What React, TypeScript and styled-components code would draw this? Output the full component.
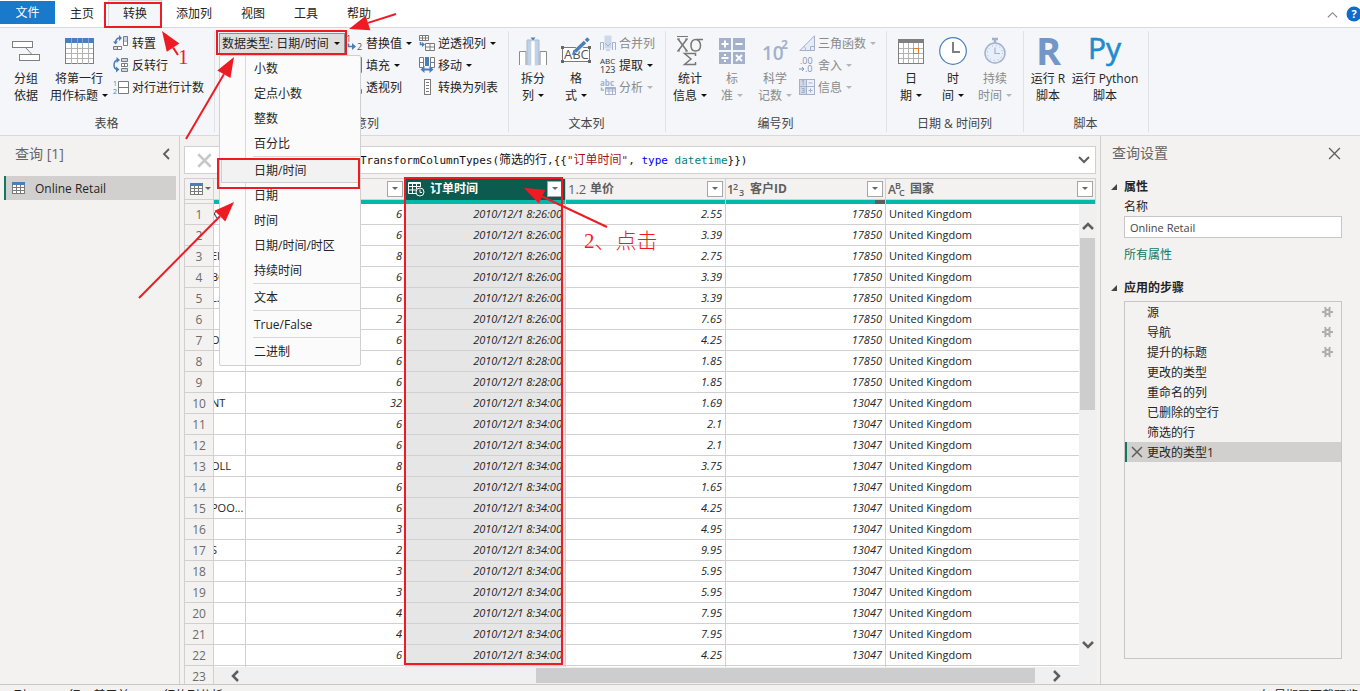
import React from 'react';
import styled, { createGlobalStyle, css } from 'styled-components';

const red = '#ed1c24';
const teal = '#01b8aa';
const line = '#d0d0d0';
const panel = '#f3f2f1';
const blue = '#4a7ebb';
const grey = '#7a7a7a';
const soft = '#a3b1cc';

const GlobalStyle = createGlobalStyle`
  *, *::before, *::after { box-sizing: border-box; }
  html, body { margin: 0; overflow: hidden; }
  body {
    font: 12px/17px "Open Sans", "Noto Sans CJK SC", sans-serif;
    color: #252423;
    background: ${panel};
  }
  button, input { font: inherit; color: inherit; }
  button { border: 0; padding: 0; background: none; cursor: pointer; }
  ul { list-style: none; margin: 0; padding: 0; }
  svg { display: block; flex: none; overflow: visible; }
`;

const App_ = styled.div`
  position: relative;
  display: flex;
  flex-direction: column;
  height: 100vh;
`;

/* ---------- tab strip ---------- */

const TabStrip = styled.nav`
  display: flex;
  gap: 1px;
  flex: none;
  height: 28px;
  padding-top: 1px;
  background: #fff;
  border-bottom: 1px solid #d6d9dd;
`;

const Tab = styled.button<{ $file?: boolean; $active?: boolean }>`
  height: ${p => (p.$file ? 23 : 26)}px;
  padding: 0 14px 1px;
  ${p => p.$file && css`
    width: 55px;
    padding: 0;
    color: #fff;
    background: #1979ca;
  `}
  ${p => p.$active && css`
    background: #f4f6f9;
    box-shadow: 0 0 0 1px #d6d9dd;
  `}
`;

const TabTools = styled.div`
  display: flex;
  align-items: center;
  gap: 8px;
  margin-left: auto;
  margin-right: -2px;
`;

/* ---------- ribbon ---------- */

const Ribbon = styled.section`
  display: flex;
  flex: none;
  height: 108px;
  background: #f4f6f9;
  border-bottom: 1px solid #d6d9dd;
`;

const Group = styled.div<{ $w: number }>`
  position: relative;
  display: flex;
  flex-direction: column;
  flex: none;
  width: ${p => p.$w}px;
  padding-top: 4px;
  &::after {
    content: '';
    position: absolute;
    right: 0;
    top: 3px;
    bottom: 3px;
    width: 1px;
    background: #dfe1e5;
  }
`;

const GroupBody = styled.div<{ $pad?: number }>`
  display: flex;
  height: 82px;
  padding-left: ${p => p.$pad ?? 3}px;
`;

const GroupLabel = styled.div`
  height: 20px;
  padding-right: 2px;
  line-height: 20px;
  text-align: center;
  color: #444;
`;

const BigButton = styled.button<{ $w: number; $off?: boolean }>`
  display: flex;
  flex-direction: column;
  align-items: center;
  flex: none;
  width: ${p => p.$w}px;
  height: 72px;
  white-space: nowrap;
  color: ${p => (p.$off ? '#8a8a8a' : 'inherit')};
`;

const BigIcon = styled.span`
  display: flex;
  align-items: center;
  justify-content: center;
  flex: none;
  height: 38px;
`;

const LabelLine = styled.span<{ $tight?: boolean }>`
  display: flex;
  align-items: center;
  gap: ${p => (p.$tight ? 2 : 4)}px;
`;

const SmallStack = styled.div<{ $w?: number }>`
  display: flex;
  flex-direction: column;
  flex: none;
  align-items: flex-start;
  width: ${p => (p.$w ? `${p.$w}px` : 'auto')};
  ${BigButton} + & { margin-left: 2px; }
`;

const SmallButton = styled.button<{ $off?: boolean }>`
  display: flex;
  align-items: center;
  gap: 3px;
  height: 22px;
  white-space: nowrap;
  color: ${p => (p.$off ? '#8a8a8a' : 'inherit')};
`;

const CaretShape = styled.span<{ $c: string }>`
  flex: none;
  border: 3px solid transparent;
  border-top-color: ${p => p.$c};
  border-bottom: 0;
`;

const TypePicker = styled.div`
  position: relative;
  flex: none;
  width: 126px;
  margin-right: 1px;
`;

const TypeButton = styled.button`
  display: flex;
  align-items: center;
  justify-content: space-between;
  width: 100%;
  height: 21px;
  margin-top: 1px;
  padding: 0 4px 0 2px;
  white-space: nowrap;
  background: #dedede;
  border: 1px solid #8f8f8f;
`;

const TypeMenu = styled.ul`
  position: absolute;
  z-index: 5;
  top: 23px;
  left: 0;
  width: 142px;
  padding-bottom: 1px;
  background: linear-gradient(to right, transparent 25px, #dadada 25px, #dadada 26px, transparent 26px) #fbfbfb;
  border: 1px solid #d0d0d0;
  border-radius: 2px;
`;

const MenuItem = styled.li<{ $hover?: boolean }>`
  height: 25px;
  padding: 0 1px;
  button {
    width: 100%;
    height: 25px;
    padding: 0 0 1px 32px;
    text-align: left;
    border: 1px solid transparent;
    ${p => p.$hover && css`
      background: #f2f2f2;
      border-color: #cfcfcf;
    `}
  }
`;

const MenuRule = styled.li`
  height: 2px;
  margin-left: 33px;
  border-top: 1px solid #d8d8d8;
`;

/* ---------- body ---------- */

const Main = styled.main`
  display: grid;
  grid-template-columns: 180px minmax(0, 1fr) 260px;
  flex: 1;
  min-height: 0;
  border-bottom: 1px solid #c8c8c8;
`;

const Queries = styled.aside`
  border-right: 1px solid #cfcfcf;
`;

const PaneTitle = styled.header`
  display: flex;
  align-items: center;
  justify-content: space-between;
  height: 34px;
  font-size: 14px;
  line-height: 20px;
  color: #666;
`;

const QueriesTitle = styled(PaneTitle)`
  height: 40px;
  padding: 0 7px 4px 15px;
`;

const QueryItem = styled.button`
  display: flex;
  align-items: center;
  gap: 10px;
  width: 172px;
  height: 24px;
  margin-left: 4px;
  padding-left: 6px;
  background: #d2d0ce;
  border-left: 2px solid #117865;
`;

const Center = styled.section`
  display: flex;
  flex-direction: column;
  gap: 4px;
  min-width: 0;
  min-height: 0;
  padding: 10px 4px 0;
`;

const FormulaBar = styled.div`
  display: flex;
  align-items: center;
  flex: none;
  height: 28px;
  padding: 0 5px 0 12px;
  background: #fff;
  border: 1px solid ${line};
`;

const Formula = styled.code`
  flex: 1;
  padding-left: 95px;
  overflow: hidden;
  white-space: nowrap;
  font: 11px/17px "DejaVu Sans Mono", "Noto Sans CJK SC", monospace;
  color: #111;
  span { font-size: 12px; }
`;

const Token = styled.b<{ $c: string }>`
  font-weight: 400;
  color: ${p => p.$c};
`;

const GridView = styled.div`
  position: relative;
  flex: 1;
  min-height: 0;
  overflow: hidden;
  background: #fff;
  border-left: 1px solid ${line};
  border-top: 1px solid ${line};
`;

const Table = styled.table`
  width: 100%;
  table-layout: fixed;
  border-spacing: 0;
  font-size: 11px;
  line-height: 16px;
  th, td {
    padding: 0;
    overflow: hidden;
    white-space: nowrap;
    border-right: 1px solid ${line};
  }
  tbody th { padding-top: 2px; }
`;

const HeadCell = styled.th<{ $sel?: boolean; $corner?: boolean }>`
  height: 25px;
  font-size: 12px;
  text-align: left;
  vertical-align: top;
  color: ${p => (p.$sel ? '#fff' : '#605e5c')};
  background: ${p => (p.$sel ? '#0b5b4f' : panel)};
  ${p => p.$corner && css`border-bottom: 1px solid ${line};`}
`;

const HeadInner = styled.div<{ $sel?: boolean; $corner?: boolean }>`
  display: flex;
  align-items: center;
  height: 21px;
  padding: 0 2px 1px ${p => (p.$corner ? 5 : 2)}px;
  border-bottom: 1px solid ${p => (p.$sel ? '#0b5b4f' : line)};
`;

const TypeGlyph = styled.span`
  display: flex;
  align-items: center;
  flex: none;
  width: 22px;
  font-size: 13px;
  font-weight: 400;
`;

const HeadName = styled.span`
  flex: 1;
`;

const FilterButton = styled.button`
  display: flex;
  align-items: center;
  justify-content: center;
  width: 16px;
  height: 16px;
  background: #fff;
  border: 1px solid #a6a6a6;
`;

const Quality = styled.div<{ $gap?: boolean }>`
  height: 4px;
  background: ${p => (p.$gap ? `linear-gradient(to left, #605e5c 10px, ${teal} 10px)` : teal)};
`;

const NumCell = styled.th`
  height: 21px;
  font-size: 12px;
  font-weight: 400;
  text-align: center;
  color: #6b6b6b;
  background: ${panel};
  border-bottom: 1px solid ${line};
`;

const Cell = styled.td<{ $num?: boolean; $sel?: boolean }>`
  height: 21px;
  border-bottom: 1px solid ${line};
  background: ${p => (p.$sel ? '#e6e6e6' : '#fff')};
  ${p => p.$num
    ? css`text-align: right; font-style: italic; && { padding-right: 3px; }`
    : css`&& { padding-left: 3px; }`}
`;

const ClippedCell = styled(Cell)`
  && { padding-left: 0; }
  text-indent: -3px;
`;

const VScroll = styled.div`
  position: absolute;
  top: 25px;
  right: 0;
  bottom: 17px;
  width: 17px;
  display: flex;
  flex-direction: column;
  padding: 13px 1px;
  background: #f0f0f0;
`;

const HScroll = styled.div`
  position: absolute;
  left: 29px;
  right: 0;
  bottom: 0;
  height: 17px;
  display: flex;
  padding: 1px 30px 1px 12px;
  background: #f0f0f0;
`;

const ScrollButton = styled.button`
  display: flex;
  align-items: center;
  justify-content: center;
  flex: 0 0 18px;
`;

const Track = styled.div<{ $row?: boolean }>`
  display: grid;
  flex: 1;
  ${p => p.$row
    ? css`grid-template-columns: 292fr 499fr 13fr; span { grid-column: 2; }`
    : css`grid-template-rows: 3fr 172fr 226fr; span { grid-row: 2; }`}
  span { background: #cdcdcd; }
`;

/* ---------- settings pane ---------- */

const Settings = styled.aside`
  display: flex;
  flex-direction: column;
  min-height: 0;
  padding: 0 18px 25px 10px;
  border-left: 1px solid #cfcfcf;
`;

const SettingsTitle = styled(PaneTitle)`
  flex: none;
  padding: 0 1px;
`;

const Section = styled.h2<{ $gap: number }>`
  display: flex;
  align-items: center;
  gap: 7px;
  flex: none;
  height: 20px;
  margin: ${p => p.$gap}px 0 0;
  font-size: 12px;
  line-height: 20px;
`;

const Fold = styled.span`
  border: 3px solid #444;
  border-top-color: transparent;
  border-left-color: transparent;
`;

const Field = styled.label`
  display: flex;
  flex-direction: column;
  flex: none;
  margin-left: 13px;
  line-height: 19px;
`;

const NameInput = styled.input`
  height: 22px;
  padding: 0 5px;
  font-size: 11px;
  color: #444;
  background: #fff;
  border: 1px solid #c8c6c4;
  border-radius: 0;
  outline: 0;
`;

const AllProps = styled.a`
  margin: 8px 0 0 13px;
  color: #117865;
  text-decoration: none;
`;

const Steps = styled.ul`
  flex: 1;
  margin: 3px 0 0 13px;
  border: 1px solid #c8c6c4;
`;

const Step = styled.li<{ $sel?: boolean }>`
  display: flex;
  align-items: center;
  height: 20px;
  padding-right: 8px;
  border-left: 2px solid ${p => (p.$sel ? '#117865' : 'transparent')};
  background: ${p => (p.$sel ? '#d2d0ce' : 'transparent')};
`;

const StepMark = styled.span`
  flex: none;
  width: 20px;
  padding-left: 4px;
`;

const StepName = styled.span`
  flex: 1;
`;

const StatusBar = styled.footer`
  display: flex;
  flex: none;
  gap: 13px;
  height: 24px;
  margin-bottom: -18px;
  padding: 2px 2px 0 4px;
  white-space: nowrap;
  background: ${panel};
  > :last-child { margin-left: auto; }
`;

/* ---------- red callouts ---------- */

const Callouts = styled.svg`
  position: absolute;
  z-index: 10;
  top: 0;
  left: 0;
  overflow: visible;
  pointer-events: none;
`;

const CalloutText = styled.span<{ $x: number; $y: number }>`
  position: absolute;
  z-index: 10;
  left: ${p => p.$x}px;
  top: ${p => p.$y}px;
  font: 300 21px/24px "Liberation Serif", "Noto Sans CJK SC", serif;
  color: ${red};
`;

function Arrow({ from, to, head = 20 }: { from: [number, number]; to: [number, number]; head?: number }) {
  const dx = to[0] - from[0];
  const dy = to[1] - from[1];
  const len = Math.hypot(dx, dy);
  const ux = dx / len;
  const uy = dy / len;
  const bx = to[0] - ux * head;
  const by = to[1] - uy * head;
  const half = head * 0.38;
  return (
    <g stroke="none" fill={red}>
      <line x1={from[0]} y1={from[1]} x2={bx} y2={by} stroke={red} strokeWidth="2" />
      <polygon points={`${to[0]},${to[1]} ${bx - uy * half},${by + ux * half} ${bx + uy * half},${by - ux * half}`} />
    </g>
  );
}

/* ---------- icons ---------- */

const Caret = ({ off, color }: { off?: boolean; color?: string }) => (
  <CaretShape $c={color ?? (off ? '#b5b5b5' : '#111')} />
);

const TableIcon = () => (
  <svg width="13" height="12" viewBox="0 0 13 12" shapeRendering="crispEdges">
    <rect width="13" height="12" fill="#7a7a7a" />
    <rect width="13" height="3" fill={blue} />
    {[3, 6, 9].map(y => [1, 5, 9].map(x => (
      <rect key={`${x}-${y}`} x={x} y={y} width="3" height="2" fill="#fff" />
    )))}
  </svg>
);

const GroupByIcon = () => (
  <svg width="28" height="21" viewBox="0 0 28 21" fill="#fff" stroke="#7f7f7f">
    <path d="M13.500 6.500L20 13.500" />
    <rect x=".5" y=".5" width="20" height="6" />
    <rect x="7.500" y="13.500" width="20" height="6" />
  </svg>
);

const FirstRowIcon = () => (
  <svg width="29" height="27" viewBox="0 0 29 27" shapeRendering="crispEdges">
    <rect x=".5" y=".5" width="28" height="25" fill="#fff" stroke="#7f7f7f" />
    <rect x="0" y="0" width="29" height="5" fill={blue} />
    <path d="M6.500 5V26M12.500 5V26M17.500 5V26M23.500 5V26M1 10.500H28M1 15.500H28M1 20.500H28" stroke="#b4b4b4" />
    <path d="M6.500 0V5M12.500 0V5M17.500 0V5M23.500 0V5" stroke="#7fa3d0" />
  </svg>
);

const TransposeIcon = () => (
  <svg width="16" height="16" viewBox="0 0 16 16" fill="none">
    <path d="M10.500 1.500h4v9h-4zM10.500 6h4M.5 11.500h8v3h-8zM4.500 11.500v3" fill="#fff" stroke={grey} />
    <path d="M11 2h3v3.500h-3zM1 12h3v2H1z" fill="#c9d8ea" />
    <path d="M2.500 8C2.500 5 4 3 7 3" stroke={blue} strokeWidth="1.500" />
    <path d="M6 0L9 3L6 6zM0 6.500h5L2.500 9.500z" fill={blue} />
  </svg>
);

const ReverseIcon = () => (
  <svg width="16" height="16" viewBox="0 0 16 16" fill="none">
    <path d="M8.500 6.500h6v3h-6zM11.500 6.500v3" fill="#fff" stroke={grey} />
    <path d="M8.500 1.500h6v3h-6zM8.500 11.500h6v3h-6z" fill="#c9d8ea" stroke={grey} />
    <path d="M4.500 3C0 4 0 11.500 4 12.500" stroke={blue} strokeWidth="1.500" />
    <path d="M3.500 0L7 3L3.500 6zM3 9.500L6.500 12.500L3 15.500z" fill={blue} />
  </svg>
);

const CountRowsIcon = () => (
  <svg width="16" height="16" viewBox="0 0 16 16">
    <path d="M5.500 2.500h10v12h-10zM5.500 8.500h10" fill="#fff" stroke={grey} />
    <text x="0" y="7" fontSize="7" fill={blue}>1</text>
    <text x="0" y="15" fontSize="7" fill={blue}>2</text>
  </svg>
);

const ReplaceIcon = () => (
  <svg width="17" height="16" viewBox="0 0 17 16">
    <text x="0" y="7" fontSize="9" fill="#555">1</text>
    <text x="11" y="15" fontSize="9" fill="#555">2</text>
    <path d="M2.500 8.500V11.500H7" fill="none" stroke={blue} strokeWidth="1.500" />
    <path d="M6 8L10 11.500L6 15z" fill={blue} />
  </svg>
);

const FillIcon = () => (
  <svg width="17" height="16" viewBox="0 0 17 16">
    <path d="M4.500 .5h11v15h-11zM4.500 5.500h11M4.500 10.500h11" fill="#fff" stroke={grey} />
    <path d="M9.500 3v6M7 8h5L9.500 12z" fill={blue} stroke={blue} />
  </svg>
);

const PivotIcon = () => (
  <svg width="17" height="16" viewBox="0 0 17 16">
    <path d="M.5 1.500h9v6h-9zM.5 4.500h9M5 1.500v6M9.500 10.500h6v4h-6z" fill="#fff" stroke={grey} />
    <path d="M3.500 9v3H6" fill="none" stroke={blue} />
  </svg>
);

const UnpivotIcon = () => (
  <svg width="16" height="16" viewBox="0 0 16 16" fill="#fff" stroke={grey}>
    <path d="M.5 .5h9v5h-9zM.5 3h9M3.500 .5v5M6.500 .5v5" />
    <path d="M6.500 8.500h9v7h-9zM6.500 12h9M11 8.500v7" />
    <path d="M1.500 7v2.500H4" fill="none" stroke={blue} strokeWidth="1.500" />
    <path d="M3 7L6 9.500L3 12z" fill={blue} stroke="none" />
  </svg>
);

const MoveIcon = () => (
  <svg width="16" height="16" viewBox="0 0 16 16" fill="#fff" stroke={grey}>
    <path d="M.5 .5h4v10h-4zM11.500 .5h4v10h-4zM.5 5.500h4M11.500 5.500h4" />
    <rect x="6" y="0" width="4" height="9" fill={blue} stroke="none" />
    <path d="M3 12.500h10" stroke={blue} strokeWidth="2" />
    <path d="M5.500 9L1.500 12.500L5.500 16zM10.500 9L14.500 12.500L10.500 16z" fill={blue} stroke="none" />
  </svg>
);

const ListIcon = () => (
  <svg width="16" height="16" viewBox="0 0 16 16" shapeRendering="crispEdges">
    <rect x="5.500" y=".5" width="6" height="15" fill="#fff" stroke={grey} />
    <path d="M7 3.500h3M7 6.500h3M7 9.500h3M7 12.500h3" stroke={grey} />
  </svg>
);

const SplitIcon = () => (
  <svg width="28" height="30" viewBox="0 0 28 30" fill="#fff" stroke="#8c8c8c">
    <path d="M.5 29V15.500H7V29M21 29V15.500H27.500V29" />
    <path d="M8.500 29V4.500H12V29zM16 29V4.500H19.500V29z" fill="#c0d2e8" stroke="#c0d2e8" />
    <path d="M8 29V4H20V29" fill="none" stroke="#a8b9cf" />
    <path d="M14 6V29" stroke="#fff" strokeWidth="3" />
    <path d="M11.500 1.500h5L14 4.500z" fill={blue} stroke="none" />
  </svg>
);

const FormatIcon = () => (
  <svg width="30" height="28" viewBox="0 0 30 28">
    <rect x="1.500" y="10.500" width="27" height="14" fill="#fff" stroke={grey} />
    <path d="M0 9h3v3h-3zM27 9h3v3h-3zM0 23h3v3h-3zM27 23h3v3h-3z" fill="#666" />
    <text x="3" y="22" fontSize="13" fill="#555">ABC</text>
    <path d="M15.500 13.500L25 4" stroke="#f4f6f9" strokeWidth="5" />
    <path d="M14 14.500L24 5" stroke={blue} strokeWidth="3.500" />
    <path d="M25 4L27.500 1.500" stroke={blue} strokeWidth="3.500" />
    <path d="M12.300 13.500L11 18L15.500 16.700z" fill={blue} />
  </svg>
);

const MergeIcon = () => (
  <svg width="16" height="16" viewBox="0 0 16 16" fill="none" stroke={soft}>
    <path d="M.5 15V7.500H3.500V15M12.500 15V7.500H15.500V15" />
    <rect x="5" y="1" width="6" height="12" fill="#cdd9ea" stroke="#cdd9ea" />
    <path d="M5 8L8 11M11 8L8 11M6 15h4" />
  </svg>
);

const ExtractIcon = () => (
  <svg width="16" height="16" viewBox="0 0 16 16" fill="#333">
    <text x="0" y="7" fontSize="8">ABC</text>
    <text x="0" y="16" fontSize="9">123</text>
  </svg>
);

const ParseIcon = () => (
  <svg width="16" height="16" viewBox="0 0 16 16">
    <text x="0" y="7" fontSize="8" fontWeight="700" fill={soft}>abc</text>
    <path d="M5.500 8.500h10v7h-10zM5.500 12h10M9 8.500v7M12.500 8.500v7" fill="#fff" stroke={soft} />
    <path d="M5.500 8.500h10v2h-10z" fill={soft} />
    <path d="M1.500 8.500v2.500H4" fill="none" stroke={soft} strokeWidth="1.500" />
  </svg>
);

const StatsIcon = () => (
  <svg width="28" height="32" viewBox="0 0 28 32">
    <g fill="none" stroke="#777">
      <path d="M1 1.500H12" />
      <path d="M2 4L11 16M11 4L2 16" strokeWidth="1.500" />
      <path d="M1 4h3M9 4h3M1 16h3M9 16h3" />
      <path d="M27 4.500H20C16 4.500 15 8 15 10.500C15 14 17 16 19.500 16C22.500 16 24.500 14 24.500 10.500C24.500 7.500 23 5.500 20.500 4.500" strokeWidth="1.500" />
      <path d="M19.500 21V18.500H8.500L15 24L8.500 29.500H19.500V27" strokeWidth="1.500" />
    </g>
  </svg>
);

const StandardIcon = () => (
  <svg width="26" height="26" viewBox="0 0 26 26">
    <path d="M0 0h12v12H0zM14 0h12v12H14zM0 14h12v12H0zM14 14h12v12H14z" fill={soft} />
    <path d="M6 2.500v7M2.500 6h7M16.500 6h7M2.500 20h7M17 17l6 6M23 17l-6 6" stroke="#fff" strokeWidth="2" />
    <path d="M5 16h2v2H5zM5 22h2v2H5z" fill="#fff" />
  </svg>
);

const ScientificIcon = () => (
  <svg width="26" height="28" viewBox="0 0 26 28" fill={soft} fontWeight="700">
    <text x="0" y="23" fontSize="19" fontWeight="600">10</text>
    <text x="19" y="12" fontSize="12">2</text>
  </svg>
);

const TrigIcon = () => (
  <svg width="16" height="16" viewBox="0 0 16 16" fill="#e6ecf5" stroke={soft}>
    <path d="M.8 15.500L15.500 .8V15.500z" />
    <path d="M5 11.500C6.500 12.500 6.500 14 6.500 15.500M11.500 15.500v-4h4" fill="none" />
  </svg>
);

const RoundIcon = () => (
  <svg width="16" height="16" viewBox="0 0 16 16" fill="#8393b3">
    <text x="1" y="7" fontSize="9">.00</text>
    <text x="6" y="15" fontSize="9">.0</text>
    <path d="M0 12h5M3 10l2 2l-2 2" fill="none" stroke="#8393b3" />
  </svg>
);

const InfoIcon = () => (
  <svg width="16" height="16" viewBox="0 0 16 16">
    <rect x=".5" y=".5" width="15" height="15" fill="#eef2f8" stroke={soft} />
    <rect x="1" y="1" width="6" height="14" fill="#cfd9e8" />
    <path d="M7.500 0V16M0 7.500H16M9.500 4h4M9.500 11.500h4M11.500 9.500v4" stroke={soft} />
    <g fontSize="7" fill="#8393b3">
      <text x="2" y="6">1</text>
      <text x="2" y="14">3</text>
    </g>
  </svg>
);

const CalendarIcon = () => (
  <svg width="26" height="25" viewBox="0 0 26 25" shapeRendering="crispEdges">
    <rect x=".5" y=".5" width="25" height="24" fill="#fff" stroke="#7f7f7f" />
    <rect width="26" height="4" fill="#7f7f7f" />
    <path d="M5.500 4V24M10.500 4V24M15.500 4V24M20.500 4V24M1 9.500H25M1 14.500H25M1 19.500H25" stroke="#b4b4b4" />
    <rect x="15.500" y="9.500" width="5" height="5" fill="#fff" stroke="#e07b28" />
  </svg>
);

const ClockIcon = () => (
  <svg width="28" height="28" viewBox="0 0 28 28">
    <circle cx="14" cy="14" r="13.300" fill="#fff" stroke={blue} strokeWidth="1.200" />
    <path d="M14 5V15H21" fill="none" stroke="#7f7f7f" strokeWidth="2" />
  </svg>
);

const StopwatchIcon = () => (
  <svg width="22" height="26" viewBox="0 0 22 26">
    <path d="M8 1h6M11 1v4" stroke={soft} strokeWidth="2.500" />
    <circle cx="11" cy="15" r="10" fill="#e8effa" stroke={soft} strokeWidth="1.500" />
    <circle cx="11" cy="15" r="7.500" fill="none" stroke={soft} strokeDasharray="1 3" />
    <path d="M11 9.500V15.500H16" fill="none" stroke={soft} strokeWidth="1.200" />
  </svg>
);

const RIcon = () => (
  <svg width="24" height="30" viewBox="0 0 24 30">
    <text x="0" y="29" fontSize="38" fontWeight="700" fill="#7396c8">R</text>
  </svg>
);

const PyIcon = () => (
  <svg width="34" height="30" viewBox="0 0 34 30">
    <text x="0" y="23" fontSize="30" fill="#1e8bcd" stroke="#1e8bcd" strokeWidth=".6">Py</text>
  </svg>
);

const Cross = ({ size, color, w = 1.5 }: { size: number; color: string; w?: number }) => (
  <svg width={size} height={size} viewBox="0 0 12 12">
    <path d="M1 1L11 11M11 1L1 11" stroke={color} strokeWidth={w} />
  </svg>
);

const Chevron = ({ dir, w = 2.5, size = 12, color = '#605e5c' }: { dir: 'up' | 'down' | 'left' | 'right'; w?: number; size?: number; color?: string }) => {
  const d = {
    up: 'M1 9L6 4L11 9',
    down: 'M1 3L6 8L11 3',
    left: 'M9 1L4 6L9 11',
    right: 'M3 1L8 6L3 11',
  }[dir];
  return (
    <svg width={size} height={size} viewBox="0 0 12 12" fill="none">
      <path d={d} stroke={color} strokeWidth={w} />
    </svg>
  );
};

const GearIcon = () => (
  <svg width="11" height="12" viewBox="0 0 11 12" fill="none" stroke="#b0aeac">
    <path d="M0 6h3M8 6h3M3 1l1 2.500M8 1l-1 2.500M3 11l1-2.500M8 11l-1-2.500" strokeWidth="2" />
    <path d="M3.500 4h4v4h-4z" strokeWidth="2" />
  </svg>
);

const DateTimeGlyph = () => (
  <svg width="17" height="16" viewBox="0 0 17 16" fill="none" stroke="#fff">
    <path d="M8 12.500H.5V1.500H12.500V6" />
    <path d="M1 2.500H12M1 5.500H12M1 9H8M4.500 3V12M8.500 3V8" />
    <circle cx="12" cy="11" r="4" fill="#0b5b4f" />
    <path d="M12 8.500V11.500H14" />
  </svg>
);

const IntGlyph = () => (
  <svg width="18" height="16" viewBox="0 0 18 16" fill="#605e5c" fontWeight="600">
    <text x="-1" y="13" fontSize="12">1</text>
    <text x="5" y="9" fontSize="9">2</text>
    <text x="11" y="15" fontSize="9">3</text>
  </svg>
);

const TextGlyph = () => (
  <svg width="18" height="16" viewBox="0 0 18 16" fill="#605e5c" fontWeight="600">
    <text x="0" y="13" fontSize="12">A</text>
    <text x="7" y="8" fontSize="9">B</text>
    <text x="11" y="15" fontSize="9">C</text>
  </svg>
);

const HelpIcon = () => (
  <svg width="16" height="16" viewBox="0 0 16 16">
    <circle cx="8" cy="8" r="7.500" fill="#0f6cc9" />
    <text x="8" y="12" fontSize="11" fontWeight="700" fill="#fff" textAnchor="middle">?</text>
  </svg>
);

/* ---------- ribbon parts ---------- */

function Big({ w, icon, lines, menu, off }: { w: number; icon: React.ReactNode; lines: [string, string]; menu?: boolean; off?: boolean }) {
  return (
    <BigButton $w={w} $off={off}>
      <BigIcon>{icon}</BigIcon>
      <LabelLine>{lines[0]}</LabelLine>
      <LabelLine>{lines[1]}{menu && <Caret off={off} />}</LabelLine>
    </BigButton>
  );
}

function Small({ icon, text, menu, off }: { icon: React.ReactNode; text: string; menu?: boolean; off?: boolean }) {
  return (
    <SmallButton $off={off}>
      {icon}
      <LabelLine>{text}{menu && <Caret off={off} />}</LabelLine>
    </SmallButton>
  );
}

/* ---------- data ---------- */

type Row = [string, number, string, string, string];
const rows: Row[] = [
  ['X', 6, '8:26:00', '2.55', '17850'],
  ['', 6, '8:26:00', '3.39', '17850'],
  ['EI', 8, '8:26:00', '2.75', '17850'],
  ['BC', 6, '8:26:00', '3.39', '17850'],
  ['L.', 6, '8:26:00', '3.39', '17850'],
  ['', 2, '8:26:00', '7.65', '17850'],
  ['OE', 6, '8:26:00', '4.25', '17850'],
  ['', 6, '8:28:00', '1.85', '17850'],
  ['', 6, '8:28:00', '1.85', '17850'],
  ['NT', 32, '8:34:00', '1.69', '13047'],
  ['', 6, '8:34:00', '2.1', '13047'],
  ['', 6, '8:34:00', '2.1', '13047'],
  ['OLL', 8, '8:34:00', '3.75', '13047'],
  ['', 6, '8:34:00', '1.65', '13047'],
  ['POO...', 6, '8:34:00', '4.25', '13047'],
  ['', 3, '8:34:00', '4.95', '13047'],
  ['S', 2, '8:34:00', '9.95', '13047'],
  ['', 3, '8:34:00', '5.95', '13047'],
  ['', 3, '8:34:00', '5.95', '13047'],
  ['', 4, '8:34:00', '7.95', '13047'],
  ['', 4, '8:34:00', '7.95', '13047'],
  ['', 6, '8:34:00', '4.25', '13047'],
  ['', 6, '8:34:00', '4.25', '13047'],
];

const typeMenu = [
  ['小数', '定点小数', '整数', '百分比'],
  ['日期/时间', '日期', '时间', '日期/时间/时区', '持续时间'],
  ['文本'],
  ['True/False'],
  ['二进制'],
];

const steps = ['源', '导航', '提升的标题', '更改的类型', '重命名的列', '已删除的空行', '筛选的行', '更改的类型1'];

function ColumnHead({ glyph, name, sel, gap }: { glyph?: React.ReactNode; name?: string; sel?: boolean; gap?: boolean }) {
  return (
    <HeadCell $sel={sel} scope="col">
      <HeadInner $sel={sel}>
        <TypeGlyph>{glyph}</TypeGlyph>
        <HeadName>{name}</HeadName>
        <FilterButton aria-label="筛选"><Caret color="#666" /></FilterButton>
      </HeadInner>
      <Quality $gap={gap} />
    </HeadCell>
  );
}

export default function App() {
  return (
    <App_>
      <GlobalStyle />
      <TabStrip>
        <Tab $file>文件</Tab>
        <Tab>主页</Tab>
        <Tab $active>转换</Tab>
        <Tab>添加列</Tab>
        <Tab>视图</Tab>
        <Tab>工具</Tab>
        <Tab>帮助</Tab>
        <TabTools>
          <button aria-label="折叠功能区"><Chevron dir="up" w={1.2} size={11} color="#888" /></button>
          <button aria-label="帮助"><HelpIcon /></button>
        </TabTools>
      </TabStrip>

      <Ribbon>
        <Group $w={215}>
          <GroupBody $pad={5}>
            <Big w={42} icon={<GroupByIcon />} lines={['分组', '依据']} />
            <Big w={64} icon={<FirstRowIcon />} lines={['将第一行', '用作标题']} menu />
            <SmallStack>
              <Small icon={<TransposeIcon />} text="转置" />
              <Small icon={<ReverseIcon />} text="反转行" />
              <Small icon={<CountRowsIcon />} text="对行进行计数" />
            </SmallStack>
          </GroupBody>
          <GroupLabel>表格</GroupLabel>
        </Group>

        <Group $w={294}>
          <GroupBody $pad={4}>
            <TypePicker>
              <TypeButton aria-haspopup="menu" aria-expanded="true">数据类型: 日期/时间<Caret /></TypeButton>
              <TypeMenu role="menu">
                {typeMenu.map((part, i) => (
                  <React.Fragment key={i}>
                    {i > 0 && <MenuRule role="separator" />}
                    {part.map(t => (
                      <MenuItem key={t} $hover={t === '日期/时间'}>
                        <button role="menuitem">{t}</button>
                      </MenuItem>
                    ))}
                  </React.Fragment>
                ))}
              </TypeMenu>
            </TypePicker>
            <SmallStack $w={73}>
              <Small icon={<ReplaceIcon />} text="替换值" menu />
              <Small icon={<FillIcon />} text="填充" menu />
              <Small icon={<PivotIcon />} text="透视列" />
            </SmallStack>
            <SmallStack>
              <Small icon={<UnpivotIcon />} text="逆透视列" menu />
              <Small icon={<MoveIcon />} text="移动" menu />
              <Small icon={<ListIcon />} text="转换为列表" />
            </SmallStack>
          </GroupBody>
          <GroupLabel>任意列</GroupLabel>
        </Group>

        <Group $w={157}>
          <GroupBody>
            <Big w={42} icon={<SplitIcon />} lines={['拆分', '列']} menu />
            <Big w={44} icon={<FormatIcon />} lines={['格', '式']} menu />
            <SmallStack>
              <Small icon={<MergeIcon />} text="合并列" off />
              <Small icon={<ExtractIcon />} text="提取" menu />
              <Small icon={<ParseIcon />} text="分析" menu off />
            </SmallStack>
          </GroupBody>
          <GroupLabel>文本列</GroupLabel>
        </Group>

        <Group $w={221}>
          <GroupBody>
            <Big w={42} icon={<StatsIcon />} lines={['统计', '信息']} menu />
            <Big w={42} icon={<StandardIcon />} lines={['标', '准']} menu off />
            <Big w={44} icon={<ScientificIcon />} lines={['科学', '记数']} menu off />
            <SmallStack>
              <Small icon={<TrigIcon />} text="三角函数" menu off />
              <Small icon={<RoundIcon />} text="舍入" menu off />
              <Small icon={<InfoIcon />} text="信息" menu off />
            </SmallStack>
          </GroupBody>
          <GroupLabel>编号列</GroupLabel>
        </Group>

        <Group $w={137}>
          <GroupBody>
            <Big w={42} icon={<CalendarIcon />} lines={['日', '期']} menu />
            <Big w={42} icon={<ClockIcon />} lines={['时', '间']} menu />
            <Big w={42} icon={<StopwatchIcon />} lines={['持续', '时间']} menu off />
          </GroupBody>
          <GroupLabel>日期 &amp; 时间列</GroupLabel>
        </Group>

        <Group $w={125}>
          <GroupBody>
            <Big w={42} icon={<RIcon />} lines={['运行 R', '脚本']} />
            <Big w={72} icon={<PyIcon />} lines={['运行 Python', '脚本']} />
          </GroupBody>
          <GroupLabel>脚本</GroupLabel>
        </Group>
      </Ribbon>

      <Main>
        <Queries>
          <QueriesTitle>
            <span>查询 [1]</span>
            <button aria-label="折叠"><Chevron dir="left" w={1.8} /></button>
          </QueriesTitle>
          <QueryItem><TableIcon />Online Retail</QueryItem>
        </Queries>

        <Center>
          <FormulaBar>
            <Cross size={15} color="#c8c8c8" w={2} />
            <Formula>
              = Table.TransformColumnTypes(<span>筛选的行</span>,{'{{'}
              <Token $c="#a31515">"<span>订单时间</span>"</Token>,{' '}
              <Token $c="#0000ff">type</Token> <Token $c="#008080">datetime</Token>{'}})'}
            </Formula>
            <button aria-label="展开"><Chevron dir="down" w={2} /></button>
          </FormulaBar>

          <GridView>
            <Table>
              <colgroup>
                <col style={{ width: 29 }} />
                <col style={{ width: 32 }} />
                <col style={{ width: 160 }} />
                <col style={{ width: 160 }} />
                <col style={{ width: 160 }} />
                <col style={{ width: 160 }} />
                <col />
              </colgroup>
              <thead>
                <tr>
                  <HeadCell $corner scope="col">
                    <HeadInner $corner>
                      <LabelLine $tight><TableIcon /><Caret color="#666" /></LabelLine>
                    </HeadInner>
                  </HeadCell>
                  <HeadCell scope="col"><HeadInner /><Quality /></HeadCell>
                  <ColumnHead />
                  <ColumnHead glyph={<DateTimeGlyph />} name="订单时间" sel />
                  <ColumnHead glyph="1.2" name="单价" />
                  <ColumnHead glyph={<IntGlyph />} name="客户ID" gap />
                  <ColumnHead glyph={<TextGlyph />} name="国家" />
                </tr>
              </thead>
              <tbody>
                {rows.map(([desc, qty, time, price, id], i) => (
                  <tr key={i}>
                    <NumCell scope="row">{i + 1}</NumCell>
                    <ClippedCell>{desc}</ClippedCell>
                    <Cell $num>{qty}</Cell>
                    <Cell $num $sel>2010/12/1 {time}</Cell>
                    <Cell $num>{price}</Cell>
                    <Cell $num>{id}</Cell>
                    <Cell>United Kingdom</Cell>
                  </tr>
                ))}
              </tbody>
            </Table>
            <VScroll>
              <ScrollButton aria-label="向上滚动"><Chevron dir="up" /></ScrollButton>
              <Track><span /></Track>
              <ScrollButton aria-label="向下滚动"><Chevron dir="down" /></ScrollButton>
            </VScroll>
            <HScroll>
              <ScrollButton aria-label="向左滚动"><Chevron dir="left" /></ScrollButton>
              <Track $row><span /></Track>
              <ScrollButton aria-label="向右滚动"><Chevron dir="right" /></ScrollButton>
            </HScroll>
          </GridView>
        </Center>

        <Settings>
          <SettingsTitle>
            <span>查询设置</span>
            <button aria-label="关闭"><Cross size={13} color="#605e5c" w={1.2} /></button>
          </SettingsTitle>
          <Section $gap={7}><Fold />属性</Section>
          <Field>
            名称
            <NameInput defaultValue="Online Retail" />
          </Field>
          <AllProps href="#properties">所有属性</AllProps>
          <Section $gap={15}><Fold />应用的步骤</Section>
          <Steps>
            {steps.map((s, i) => (
              <Step key={s} $sel={i === steps.length - 1}>
                <StepMark>{i === steps.length - 1 && <Cross size={12} color="#605e5c" />}</StepMark>
                <StepName>{s}</StepName>
                {i < 3 && <button aria-label="设置"><GearIcon /></button>}
              </Step>
            ))}
          </Steps>
        </Settings>
      </Main>

      <StatusBar>
        <span>8 列、999+ 行</span>
        <span>基于前 1000 行的列分析</span>
        <span>在 星期四下载预览</span>
      </StatusBar>

      <Callouts width="1" height="1" fill="none" stroke={red} strokeWidth="2">
        <rect x="105" y="3" width="56" height="24" />
        <rect x="217" y="31" width="129" height="23" />
        <rect x="218" y="159" width="141" height="29" />
        <rect x="405" y="178" width="157" height="486" />
        <Arrow from={[178, 55]} to={[162, 31]} />
        <Arrow from={[396, 14]} to={[349, 29]} />
        <Arrow from={[186, 139]} to={[234, 57]} />
        <Arrow from={[139, 298]} to={[234, 202]} />
        <Arrow from={[607, 227]} to={[524, 188]} />
      </Callouts>
      <CalloutText $x={178} $y={45}>1</CalloutText>
      <CalloutText $x={584} $y={229}>2、点击</CalloutText>
    </App_>
  );
}
